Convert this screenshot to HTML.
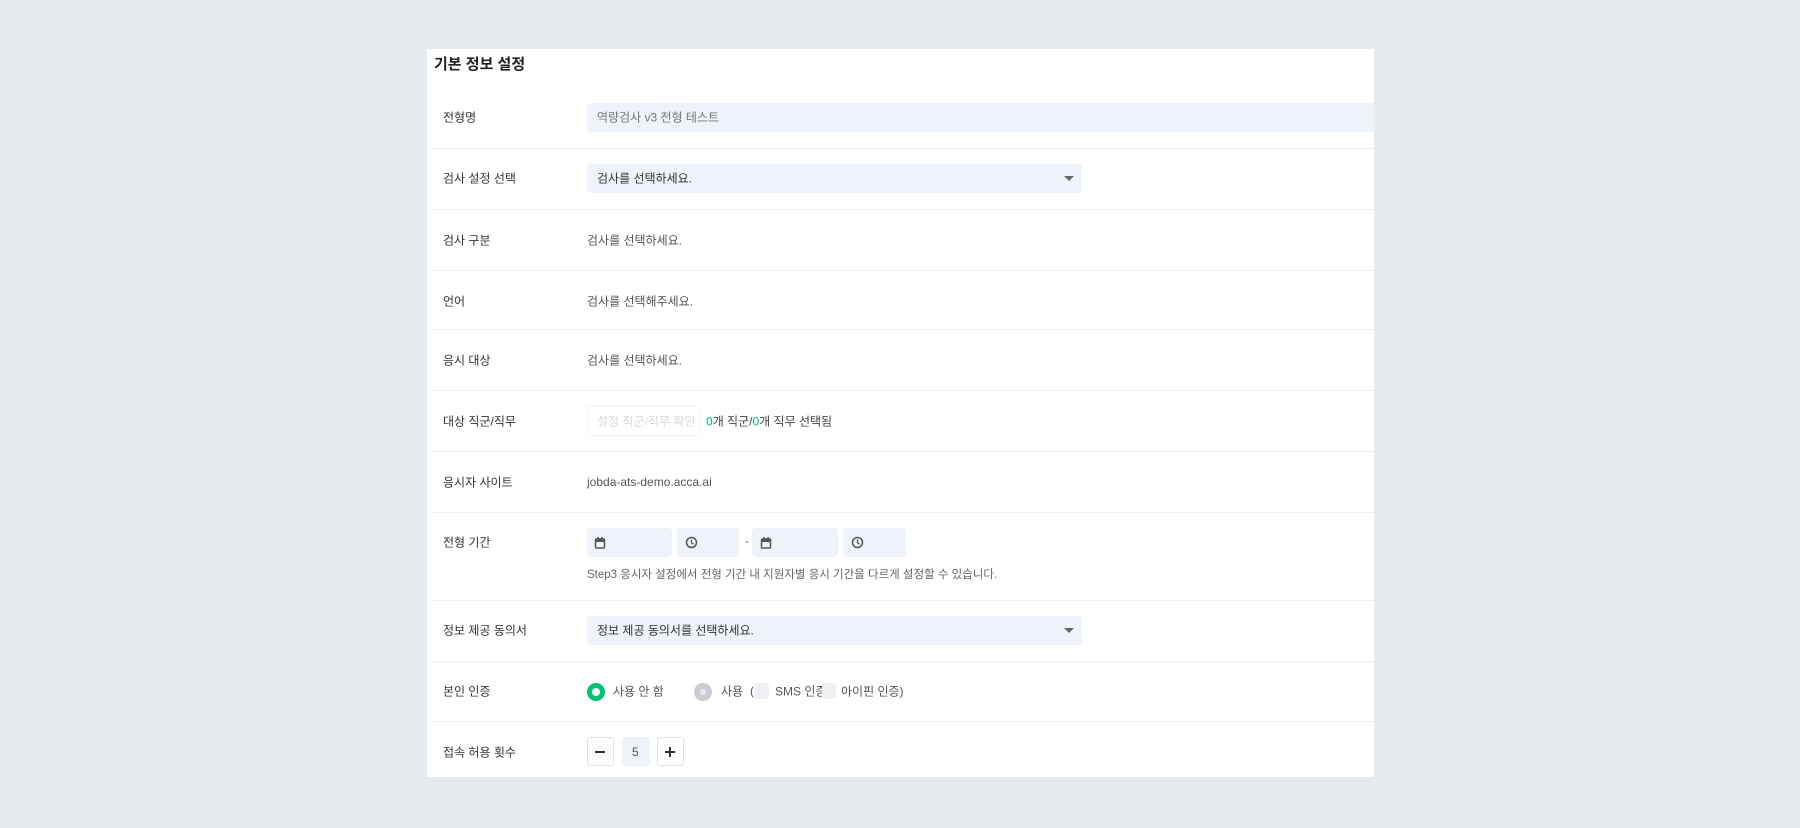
<!DOCTYPE html>
<html><head><meta charset="utf-8"><style>
*{box-sizing:border-box;margin:0;padding:0}
body{width:1800px;height:828px;background:#e8ebee;font-family:"Liberation Sans","Noto Sans CJK KR",sans-serif;position:relative;overflow:hidden;color:#333}
.panel{position:absolute;left:427px;top:49px;width:947px;height:728px;background:#fff}
.a{position:absolute;white-space:nowrap}
.t{font-size:15px;font-weight:bold;color:#222;left:434px;top:53px}
.lbl{font-size:12px;color:#333;left:443px;transform:translateY(-50%)}
.val{font-size:12px;color:#555;left:587px;transform:translateY(-50%)}
.hr{position:absolute;left:433px;width:941px;height:1px;background:#edf0f3}
.box{position:absolute;background:#eef2f9;border-radius:4px}
.caret{position:absolute;width:0;height:0;border-left:5px solid transparent;border-right:5px solid transparent;border-top:5px solid #666}
svg{position:absolute}
</style></head><body>
<div class="panel"></div>
<div class="a t">기본 정보 설정</div>

<div class="a lbl" style="top:117px">전형명</div>
<div class="box" style="left:587px;top:103px;width:787px;height:29px;border-radius:4px 0 0 4px"></div>
<div class="a val" style="top:117px;left:597px;color:#777">역량검사 v3 전형 테스트</div>
<div class="hr" style="top:148px"></div>

<div class="a lbl" style="top:178px">검사 설정 선택</div>
<div class="box" style="left:587px;top:164px;width:495px;height:29px"></div>
<div class="a val" style="top:178px;left:597px;color:#333">검사를 선택하세요.</div>
<div class="caret" style="left:1064px;top:176px"></div>
<div class="hr" style="top:209px"></div>

<div class="a lbl" style="top:240px">검사 구분</div>
<div class="a val" style="top:240px">검사를 선택하세요.</div>
<div class="hr" style="top:270px"></div>

<div class="a lbl" style="top:301px">언어</div>
<div class="a val" style="top:301px">검사를 선택해주세요.</div>
<div class="hr" style="top:329px"></div>

<div class="a lbl" style="top:360px">응시 대상</div>
<div class="a val" style="top:360px">검사를 선택하세요.</div>
<div class="hr" style="top:390px"></div>

<div class="a lbl" style="top:421px">대상 직군/직무</div>
<div style="position:absolute;left:587px;top:405px;width:113px;height:31px;border:1px solid #f1f3f6;border-radius:4px"></div>
<div class="a val" style="top:421px;left:597px;color:#d4d7dc">설정 직군/직무 확인</div>
<div class="a val" style="top:421px;left:706px;color:#444"><span style="color:#00c271">0</span>개 직군/<span style="color:#00c271">0</span>개 직무 선택됨</div>
<div class="hr" style="top:451px"></div>

<div class="a lbl" style="top:482px">응시자 사이트</div>
<div class="a val" style="top:482px">jobda-ats-demo.acca.ai</div>
<div class="hr" style="top:512px"></div>

<div class="a lbl" style="top:542px">전형 기간</div>
<div class="box" style="left:587px;top:528px;width:85px;height:29px"></div>
<div class="box" style="left:677px;top:528px;width:62px;height:29px"></div>
<div class="a" style="left:745px;top:534px;font-size:12px;color:#666">-</div>
<div class="box" style="left:752px;top:528px;width:86px;height:29px"></div>
<div class="box" style="left:843px;top:528px;width:63px;height:29px"></div>
<svg style="left:594px;top:536px" width="12" height="13" viewBox="0 0 12 13"><rect x="1.5" y="3" width="9" height="9" rx="1" fill="none" stroke="#555" stroke-width="1.5"/><rect x="1.5" y="3" width="9" height="3" fill="#555"/><path d="M4 1v3M8 1v3" stroke="#555" stroke-width="1.5"/></svg>
<svg style="left:760px;top:536px" width="12" height="13" viewBox="0 0 12 13"><rect x="1.5" y="3" width="9" height="9" rx="1" fill="none" stroke="#555" stroke-width="1.5"/><rect x="1.5" y="3" width="9" height="3" fill="#555"/><path d="M4 1v3M8 1v3" stroke="#555" stroke-width="1.5"/></svg>
<svg style="left:685px;top:536px" width="13" height="13" viewBox="0 0 13 13"><circle cx="6.5" cy="6.5" r="5" fill="none" stroke="#555" stroke-width="1.5"/><path d="M6.5 3.5v3.3l2 1.4" fill="none" stroke="#555" stroke-width="1.3"/></svg>
<svg style="left:851px;top:536px" width="13" height="13" viewBox="0 0 13 13"><circle cx="6.5" cy="6.5" r="5" fill="none" stroke="#555" stroke-width="1.5"/><path d="M6.5 3.5v3.3l2 1.4" fill="none" stroke="#555" stroke-width="1.3"/></svg>
<div class="a val" style="top:574px;font-size:11.5px;color:#666">Step3 응시자 설정에서 전형 기간 내 지원자별 응시 기간을 다르게 설정할 수 있습니다.</div>
<div class="hr" style="top:600px"></div>

<div class="a lbl" style="top:630px">정보 제공 동의서</div>
<div class="box" style="left:587px;top:616px;width:495px;height:29px"></div>
<div class="a val" style="top:630px;left:597px;color:#333">정보 제공 동의서를 선택하세요.</div>
<div class="caret" style="left:1064px;top:628px"></div>
<div class="hr" style="top:661px"></div>

<div class="a lbl" style="top:691px">본인 인증</div>
<div style="position:absolute;left:587px;top:683px;width:18px;height:18px;border-radius:50%;background:#00c271"></div>
<div style="position:absolute;left:592px;top:688px;width:8px;height:8px;border-radius:50%;background:#fff"></div>
<div class="a val" style="top:691px;left:613px">사용 안 함</div>
<div style="position:absolute;left:694px;top:683px;width:18px;height:18px;border-radius:50%;background:#c9ccd2"></div>
<div style="position:absolute;left:700px;top:689px;width:6px;height:6px;border-radius:50%;background:#e5e7ea"></div>
<div class="a val" style="top:691px;left:721px">사용</div>
<div class="a val" style="top:691px;left:750px">(</div>
<div style="position:absolute;left:755px;top:683px;width:14px;height:16px;border-radius:3px;background:#eef0f3"></div>
<div class="a val" style="top:691px;left:775px">SMS 인증</div>
<div style="position:absolute;left:822px;top:683px;width:14px;height:16px;border-radius:3px;background:#eef0f3"></div>
<div class="a val" style="top:691px;left:841px">아이핀 인증)</div>
<div class="hr" style="top:721px"></div>

<div class="a lbl" style="top:752px">접속 허용 횟수</div>
<div style="position:absolute;left:587px;top:737px;width:27px;height:29px;border:1px solid #dde1e6;border-radius:3px"></div>
<div style="position:absolute;left:595px;top:751px;width:10px;height:2px;background:#333"></div>
<div class="box" style="left:622px;top:737px;width:28px;height:29px;border-radius:3px"></div>
<div class="a" style="left:632px;top:745px;font-size:12px;color:#555">5</div>
<div style="position:absolute;left:657px;top:737px;width:27px;height:29px;border:1px solid #dde1e6;border-radius:3px"></div>
<div style="position:absolute;left:665px;top:751px;width:10px;height:2px;background:#333"></div>
<div style="position:absolute;left:669px;top:747px;width:2px;height:10px;background:#333"></div>
</body></html>
